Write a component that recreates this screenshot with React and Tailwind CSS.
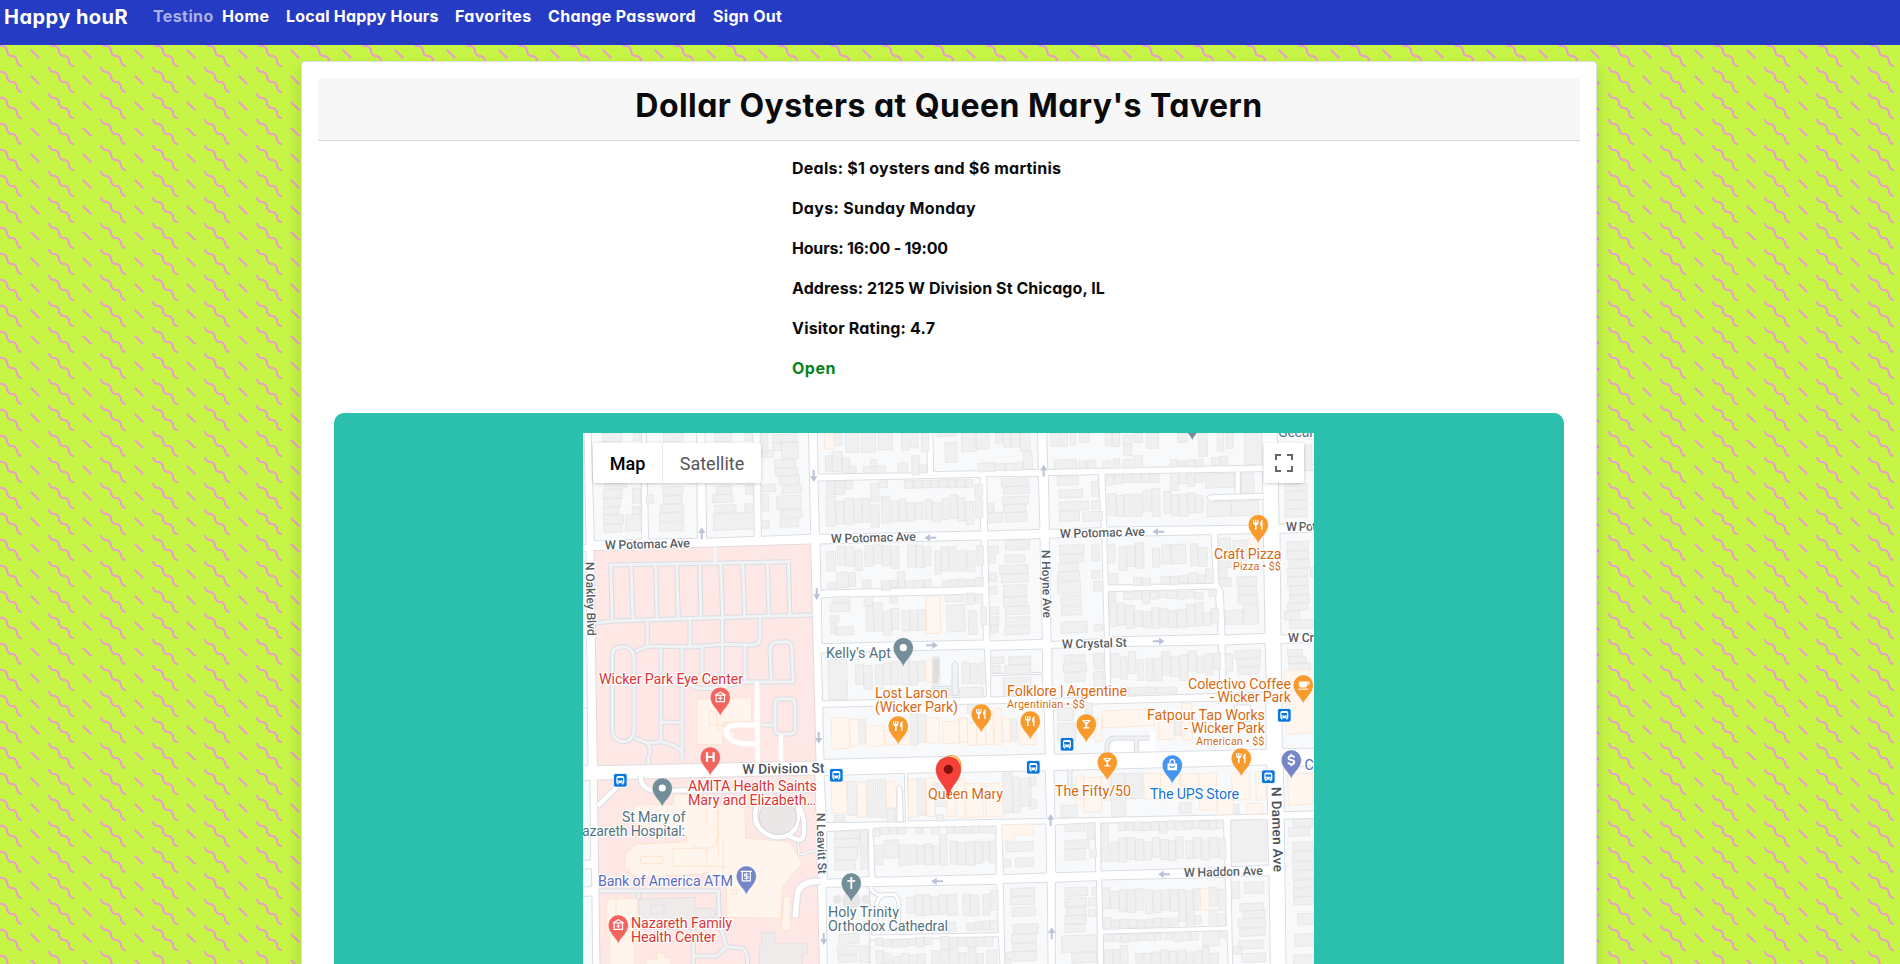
import React from "react";

/* ---------- map data: every tile is drawn in thirds of a pixel ---------- */

const TILES = [
  {
    id: "nw", at: "translate(580 425) scale(0.33333)",
    blocks: [
      "0,0 12,0 18,360 0,360", "0,380 18,380 22,852 0,852",
      "33,0 184,0 185,342 43,348", "198,0 350,0 352,340 206,342", "375,0 518,0 523,334 380,340", "540,0 685,0 692,328 544,334",
    ],
    gray: "67,24,58,26 160,24,20,22 74,175,65,15 69,194,57,28 72,218,50,28 70,246,46,22 70,270,60,26 72,298,54,24 157,190,24,44 157,246,24,22 136,268,44,50 250,24,58,26 248,185,60,24 250,212,56,24 240,238,70,24 238,264,72,24 238,292,72,26 198,210,22,26 404,24,50,26 495,24,22,22 410,183,44,26 398,208,60,24 404,240,64,22 400,264,122,50 497,180,22,28 494,236,26,22 578,28,72,26 578,52,26,25 604,50,50,52 545,24,18,60 545,75,36,22 584,103,62,26 586,128,66,24 598,152,60,26 606,180,58,24 590,212,72,40 602,254,64,24 600,282,56,24 545,178,42,22 545,208,20,50 545,286,22,24",
    cream: "",
  },
  {
    id: "n", at: "translate(820 425) scale(0.33333)",
    blocks: [
      "-8,0 320,0 322,143 -6,147", "338,0 652,0 655,133 341,140", "-6,168 480,157 482,318 -2,328", "500,155 655,155 660,313 503,318",
      "0,357 483,345 488,484 3,495", "503,346 660,341 667,643 510,648", "4,518 487,507 490,645 6,656", "4,684 493,672 500,815 8,828",
      "512,676 667,672 668,742 512,746", "512,752 668,748 668,812 512,816",
    ],
    gray: "16,92,20,46 20,170,24,40 40,24,25,38 76,24,40,58 124,24,43,58 175,24,42,50 244,24,22,52 272,24,22,44 304,24,22,56 36,80,30,60 66,100,22,42 88,124,20,18 130,124,66,18 152,104,18,30 234,114,28,30 275,92,22,58 297,120,22,22 352,24,58,10 375,52,35,60 424,24,44,56 468,24,38,48 526,24,22,32 550,24,22,42 572,24,28,42 600,24,30,54 610,80,26,52 474,114,52,26 526,116,30,20 556,116,22,20 582,112,26,24 46,170,28,38 74,170,24,22 152,176,24,54 176,168,26,20 253,166,26,24 280,166,24,24 306,166,26,22 334,166,22,22 358,164,24,24 384,164,24,24 410,164,26,24 436,164,22,24 464,178,24,36 466,220,22,58 18,214,28,90 46,230,26,66 72,220,28,78 102,222,24,70 126,220,22,72 153,240,24,66 184,214,25,80 214,228,20,62 238,223,19,64 260,234,24,56 284,232,24,50 315,223,20,60 336,232,26,58 366,220,20,64 390,210,22,70 412,218,22,70 436,230,24,68 544,160,80,24 550,184,78,22 548,214,78,24 550,238,68,24 555,262,66,28 502,236,20,26 503,262,44,30 20,380,26,58 52,364,24,56 76,366,26,58 106,376,20,60 134,362,26,62 160,360,26,54 186,362,24,60 212,364,24,66 262,360,26,66 288,362,22,66 310,366,22,56 344,378,18,70 364,366,22,72 386,366,22,72 414,376,24,62 442,378,22,62 470,362,20,58 24,472,26,20 50,442,34,46 86,442,20,42 126,465,26,24 184,468,26,28 210,466,24,22 232,440,22,46 256,468,26,20 284,466,26,22 312,464,22,24 366,468,22,20 388,464,24,22 414,462,22,24 440,464,22,20 466,458,24,26 556,346,72,28 554,390,60,22 538,420,86,26 544,446,80,26 550,480,70,36 550,514,70,30 556,544,72,24 556,576,72,24 553,604,76,24 505,364,30,22 508,390,18,24 508,444,22,26 508,484,22,24 510,546,26,22 510,574,26,26 512,602,22,22 36,514,54,18 30,536,60,24 30,572,26,20 32,596,18,30 46,606,54,24 132,514,26,28 138,542,22,76 160,534,26,84 190,558,24,72 214,550,22,64 246,556,22,62 270,556,22,60 294,554,22,62 376,510,54,20 380,540,54,80 438,504,26,34 466,508,22,26 444,556,26,72 482,544,18,56 210,514,22,20 24,704,56,120 106,718,24,60 130,722,26,70 166,720,22,70 190,716,22,62 212,710,24,68 242,700,26,80 266,710,26,70 292,708,22,60 336,696,22,82 426,712,22,64 450,716,22,60 478,712,18,64 420,794,70,22 512,696,40,20 566,694,66,24 516,722,24,22 554,720,78,26 550,758,82,52",
    cream: "13,24,28,48 318,514,42,112 318,706,18,66",
  },
  {
    id: "ne", at: "translate(1065 425) scale(0.33333)",
    blocks: [
      "-55,0 590,0 592,120 -52,133", "636,0 765,0 765,118 640,120", "-50,152 100,149 108,308 -47,313", "120,148 592,140 595,300 125,306",
      "640,140 765,135 765,295 642,298", "-47,340 110,333 118,640 -42,650", "125,335 438,329 445,475 130,480",
      "458,328 595,325 600,625 480,630 475,500 460,470", "645,325 765,320 765,627 648,630", "130,500 450,492 460,628 133,636",
      "-40,670 118,667 122,812 -38,822", "135,665 460,660 465,805 137,815", "480,660 600,655 605,800 485,806", "648,655 765,652 765,970 652,970",
    ],
    gray: "-42,24,22,40 -15,24,22,40 16,24,16,36 42,24,30,28 120,24,20,38 142,24,22,40 174,30,26,28 176,58,24,34 206,24,26,28 244,24,36,46 338,24,28,28 400,24,26,70 456,24,20,54 484,24,20,46 538,24,52,94 -32,104,66,26 42,108,24,22 68,106,24,24 114,108,22,22 144,102,20,28 174,104,26,26 206,92,26,36 316,104,22,22 338,108,24,16 366,104,24,22 392,104,22,22 440,98,26,22 466,94,22,26 -23,154,62,26 -18,194,70,24 -18,230,88,26 -17,258,60,30 80,170,20,44 80,228,26,24 54,260,58,28 125,150,22,30 148,150,24,26 174,150,24,22 200,148,26,24 228,148,24,24 254,148,28,24 316,150,24,46 342,150,24,26 366,148,22,36 390,146,26,26 422,146,96,42 528,144,38,70 128,206,26,66 154,212,22,62 176,208,22,66 204,208,26,66 234,196,24,62 260,190,24,84 296,200,22,64 318,210,22,62 342,208,24,66 368,204,22,60 390,212,24,50 426,230,72,44 498,228,82,44 660,176,66,22 660,200,66,24 660,226,66,24 660,252,66,24 718,60,22,76 -17,360,74,28 -15,388,71,24 -18,415,58,24 -22,440,66,26 -23,470,69,36 -12,512,60,28 -10,544,60,26 -12,590,78,34 80,358,22,50 80,436,24,24 86,468,22,30 88,598,24,20 127,358,22,54 162,366,22,70 184,364,26,60 210,354,26,76 262,370,22,56 290,360,28,56 318,358,44,58 376,356,22,66 400,368,26,56 130,446,28,32 206,458,24,24 232,460,24,22 288,454,26,24 314,454,26,26 342,452,26,22 370,444,28,30 400,450,20,22 422,430,24,44 462,340,34,88 462,430,24,30 466,460,32,24 504,346,42,60 516,455,58,28 520,484,54,24 518,510,60,24 534,538,46,60 480,556,54,42 134,503,18,24 134,530,20,74 156,534,24,66 182,542,26,68 206,558,26,46 234,560,24,48 260,548,22,62 284,550,22,56 310,556,24,52 336,554,28,54 364,538,26,66 390,532,24,70 414,562,24,40 438,550,22,46 176,502,24,22 206,500,24,22 232,502,22,34 256,500,24,22 280,496,26,22 306,498,28,22 336,500,22,24 364,500,24,18 390,502,24,20 432,494,22,20 666,350,64,26 666,378,64,24 672,404,60,26 668,430,60,24 668,456,60,26 674,482,56,26 674,510,58,24 668,534,60,22 658,558,46,26 674,584,80,26 736,426,20,30 -3,690,63,22 -5,716,69,24 0,742,60,28 86,686,30,46 86,740,30,64 137,686,24,70 166,696,20,66 190,680,22,66 218,704,18,62 244,700,20,68 266,700,24,68 290,680,26,70 316,694,26,60 344,690,24,76 368,678,26,60 394,694,22,50 420,686,22,64 446,684,20,50 480,686,22,54 510,676,76,24 516,702,70,22 518,726,64,22 668,674,44,20 670,696,54,20 672,714,64,26",
    cream: "546,340,34,60",
  },
  {
    id: "sw", at: "translate(580 690) scale(0.33333)",
    blocks: ["0,55 22,55 24,225 0,228", "0,275 30,270 32,510 0,512", "0,538 34,536 35,590 0,592", "0,620 36,618 38,830 0,830"],
    gray: "", cream: "",
  },
  {
    id: "s", at: "translate(820 690) scale(0.33333)",
    blocks: [
      "8,52 672,38 676,192 12,208", "12,257 253,250 257,395 20,398", "262,250 676,242 680,385 266,393", "20,425 145,418 147,560 22,568",
      "160,415 527,408 529,553 165,562", "546,405 678,402 680,549 550,554", "18,592 148,590 150,830 22,830", "148,590 530,583 535,728 155,735",
      "550,580 682,577 684,830 555,830", "150,750 535,740 540,830 150,830",
    ],
    gray: "116,88,20,74 270,56,22,110 292,74,26,82 442,45,44,25 570,88,20,64 386,-5,18,22 418,-8,70,30 82,274,26,102 140,270,26,112 172,268,24,114 202,356,24,40 290,266,26,110 44,376,30,20 350,374,22,20 548,250,28,118 578,262,20,106 602,266,30,82 626,262,22,26 628,328,22,28 350,280,30,70 44,424,76,22 42,446,76,26 44,472,68,38 44,510,62,30 120,424,22,50 120,478,22,26 122,510,20,28 158,420,22,20 164,466,24,58 192,450,44,54 236,466,24,60 266,464,24,60 290,468,24,54 312,462,26,62 336,468,24,54 358,434,22,92 390,454,22,68 410,458,26,66 438,456,26,70 464,454,22,66 488,456,20,56 508,454,20,64 180,412,26,22 206,412,24,20 230,412,28,20 288,414,22,18 334,412,24,20 380,410,22,20 404,410,22,20 430,410,24,20 454,408,24,20 478,408,24,20 508,410,22,20 558,456,82,28 586,504,54,26 552,508,20,22 260,622,24,48 285,614,22,64 308,614,22,62 332,620,22,54 356,614,24,58 380,614,30,62 428,612,22,64 450,616,26,62 488,612,20,64 512,600,22,60 360,700,26,30 386,696,22,28 440,700,22,22 464,696,22,24 488,694,22,26 508,692,26,28 572,594,72,24 570,620,74,24 576,652,70,26 580,702,74,28 574,732,74,26 578,760,72,24 582,784,68,28 556,786,20,22 554,808,20,20 56,732,60,30 52,768,60,26 54,796,56,20 118,768,26,50 166,744,22,22 188,748,26,22 214,750,22,22 240,750,22,20 264,746,24,20 288,742,24,28 312,742,24,22 362,740,24,40 388,742,24,30 414,742,24,26 440,742,24,28 468,742,22,26 494,740,24,30 168,782,22,40 190,790,22,30 218,800,22,22 244,790,22,32 268,796,24,26 292,792,24,30 334,782,22,40 360,780,26,40 388,776,26,46 416,788,22,34 444,772,24,50 470,790,20,30 500,780,30,42",
    cream: "34,84,54,92 88,88,28,80 138,108,54,60 194,120,72,44 318,84,40,74 368,94,50,66 416,84,26,72 442,98,28,68 470,94,26,70 496,66,22,98 522,54,22,110 548,84,22,70 596,100,50,64 34,274,46,96 112,276,26,106 198,274,30,80 264,270,26,112 318,264,26,116 380,300,24,80 410,268,22,116 438,280,50,102 496,280,52,100",
  },
  {
    id: "se", at: "translate(1065 690) scale(0.33333)",
    blocks: [
      "-35,45 602,30 604,178 -32,193", "-33,242 605,225 608,372 -30,385", "655,232 765,225 765,362 658,365", "-29,405 90,398 92,545 -28,548",
      "107,400 475,390 480,533 108,543", "497,390 607,388 611,525 499,530", "658,388 765,384 765,990 665,990", "-29,577 95,572 98,830 -29,830",
      "110,570 480,562 484,708 114,718", "498,560 612,557 616,830 503,830", "115,732 485,722 490,830 115,830",
    ],
    gray: "60,38,22,36 328,80,20,56 -23,54,48,38 -23,100,54,52 165,-8,26,28 192,-8,80,20 275,-8,60,18 138,250,42,130 180,250,52,76 -12,346,48,36 342,338,36,32 504,344,18,26 0,402,60,22 66,402,22,46 0,450,72,26 0,476,60,34 74,478,20,24 110,404,20,28 160,396,22,26 184,398,22,22 206,396,24,26 232,400,24,22 258,398,24,22 282,396,22,34 306,392,22,26 332,394,20,26 356,394,24,24 382,392,22,24 408,394,24,24 432,392,22,26 456,390,20,26 108,438,22,76 136,458,24,56 160,444,24,72 186,442,24,66 210,448,26,64 236,456,24,54 262,442,22,60 286,448,24,60 310,452,22,60 332,440,22,64 362,452,24,54 384,442,24,62 408,450,24,60 434,442,24,60 462,446,20,60 498,390,104,124 670,412,64,26 684,388,60,22 684,456,60,26 682,484,64,28 684,514,60,26 684,542,64,28 0,592,68,26 0,624,64,26 4,652,58,24 0,676,64,26 0,702,60,24 80,592,14,24 70,624,24,24 70,658,22,22 112,594,22,62 136,604,26,52 162,600,22,64 186,600,24,68 212,596,22,64 240,600,22,72 264,602,24,66 290,600,24,60 314,600,26,64 340,598,22,96 362,602,24,70 384,596,22,64 432,592,24,56 460,598,22,62 116,682,22,32 140,690,24,22 164,688,24,26 190,688,24,24 216,690,22,22 240,688,24,24 266,684,22,26 290,686,22,26 316,684,24,22 364,676,24,28 388,676,20,26 432,660,22,50 460,672,22,36 500,576,24,50 538,576,58,34 524,640,72,22 534,662,66,22 518,686,84,26 524,714,76,24 520,752,76,24 506,770,24,22 530,790,72,26 686,566,60,26 686,594,60,26 686,620,60,24 698,670,50,34 690,732,58,36 686,794,62,30 120,734,22,20 144,734,24,20 168,734,24,22 194,732,24,22 220,732,20,20 244,730,24,22 270,730,20,20 300,728,24,22 326,730,22,24 354,728,22,24 378,730,22,20 414,724,48,44 464,722,22,22 118,780,24,45 144,778,20,45 166,766,22,56 212,790,20,30 236,790,22,30 260,786,26,36 286,780,24,42 312,784,22,38 338,780,24,40 362,786,22,36 388,782,22,40 412,770,20,52 436,790,24,32 -10,736,106,50 20,788,75,30",
    cream: "112,60,156,50 280,80,46,68 350,40,30,110 660,-60,90,190 88,85,22,68 32,258,24,90 56,262,52,104 108,260,26,72 236,250,50,76 286,252,60,76 346,252,52,76 402,250,52,110 456,300,48,74 500,250,54,80 572,244,30,86 545,340,46,32 668,250,75,94 406,596,26,64",
  },
];

const rectPath = (list) =>
  list
    .split(" ")
    .filter(Boolean)
    .map((r) => {
      const [x, y, w, h] = r.split(",").map(Number);
      const s = w * 0.02;
      const t = h * 0.02;
      return `M${x},${y + s}L${x + w},${y - s}L${x + w + t},${y + h - s}L${x + t},${y + h + s}Z`;
    })
    .join("");

function Tile({ tile }) {
  return (
    <g transform={tile.at} strokeLinejoin="round">
      {tile.blocks.map((p) => (
        <polygon key={p} points={p} fill="#f8f9fb" stroke="#dadee4" strokeWidth="3" />
      ))}
      <path d={rectPath(tile.gray)} fill="#f0f0f0" stroke="#e5e5e6" strokeWidth="2.4" />
      <path d={rectPath(tile.cream)} fill="#fff6f0" stroke="#fce4d2" strokeWidth="2.4" />
    </g>
  );
}

function Lane({ d, w = 9, color = "#f1f3f4", edge = "#dadde2" }) {
  return (
    <g fill="none" strokeLinejoin="round" strokeLinecap="butt">
      <path d={d} stroke={edge} strokeWidth={w + 6} />
      <path d={d} stroke={color} strokeWidth={w} />
    </g>
  );
}

const LANES =
  "M86,420 L630,410 M92,420 L97,585 M153,420 L159,582 M227,418 L231,580 M290,417 L295,580 M359,416 L363,578 M422,414 L428,576 M488,413 L494,576 M562,412 L567,574 M625,410 L630,574 M45,595 L100,588 L400,578 L700,570 M202,590 V660 M330,585 V665 M427,580 V810 M540,578 V640 Q540,658 520,660 L430,658 L330,666 L205,663 L165,680 M97,915 V690 Q97,665 130,665 Q160,668 162,700 V915 Q160,948 130,950 Q100,948 97,915 M165,940 L205,955 L243,950 Q290,958 310,985 M205,955 Q215,980 205,1000 V1018 M243,670 V950 M306,670 V1010 M366,662 V752 M495,662 V772 M310,750 Q330,792 365,790 Q420,792 450,780 L495,771 L640,770 L635,670 Q635,652 620,650 L590,652 Q572,655 570,670 L574,770 M245,892 H310 M598,822 H630 Q645,822 645,838 V912 Q645,927 630,927 H600 Q585,927 585,912 V838 Q585,822 598,822 M545,900 H585";

function Hospital() {
  return (
    <>
      <g transform="translate(580 425) scale(0.33333)">
        <polygon points="42,377 692,357 708,1008 52,1022" fill="#fde8e6" stroke="#e3d9dc" strokeWidth="3" />
        <Lane d={LANES} />
        <path d="M405,365 V412" stroke="#f6f6f7" strokeWidth="10" />
        <path d="M531,772 L533,1012 M603,930 V1010" fill="none" stroke="#fff" strokeWidth="13" />
      </g>
      <g transform="translate(580 690) scale(0.33333)">
        <polygon points="52,270 705,255 718,830 60,830" fill="#fde8e6" stroke="#e3d9dc" strokeWidth="3" />
        <Lane d="M182,258 Q182,298 225,302 L700,300 M53,348 L112,290" w={13} color="#fff" />
        <Lane d="M60,603 H420 M415,600 L418,700 L440,770 L490,775 Q503,785 503,830 M345,798 H410 L440,770 M340,715 V830 M175,610 V640" />
        <g fill="#fff5ec" stroke="#fce0c8" strokeWidth="2.4">
          <path d="M350,28 L515,22 L515,95 L430,97 L428,165 L350,163Z" />
          <path d="M388,65 H410 V105 H388Z M415,102 L470,130 L460,143 L410,115Z" />
          <path d="M160,345 L280,343 L282,312 L400,316 L402,350 L470,338 L495,360 L497,445 L630,455 L665,520 L608,592 L603,685 L440,682 L440,590 L385,550 L185,562 Q145,560 148,540 Q125,530 137,510 Q130,490 150,480 Q155,460 185,462 L320,455 L320,440 L160,400Z" />
          <path d="M612,618 L630,620 L630,720 L604,720Z" />
          <path d="M80,628 L172,625 L172,702 L164,705 L165,830 L90,830 L90,740 L80,738Z M230,790 L255,790 L255,805 L270,805 L270,830 L200,830 L200,808 L230,808Z" />
          <path d="M182,500 H248 V520 H182Z M280,475 H380 V528 H280Z M380,360 V455 M415,340 V500 M430,450 V560 M380,530 H440 M108,628 V740 M456,598 H472 V610 H456Z" />
          <path d="M410,345 q12,12 0,24 q12,12 0,24 q12,12 0,24 q12,12 0,24 v20 q-12,20 -24,8 q-12,12 -24,0 q-12,10 -24,-4" />
        </g>
        <path d="M175,627 L345,622 L345,655 L405,655 L405,682 L345,685 L343,718 L182,718Z M545,728 H585 V760 H682 V792 H666 V830 H538 V768 H545Z M212,645 H252 V672 H212Z" fill="#f0ebeb" stroke="#e2dddf" strokeWidth="2.4" />
        <Lane d="M530,345 Q515,400 550,425 Q590,455 630,432 Q660,405 655,350 M655,348 Q675,380 672,415 Q675,450 655,450 L625,437 L650,412" w={13} color="#fff" />
        <ellipse cx="594" cy="383" rx="56" ry="50" fill="#ece7e7" stroke="#d8d5d7" strokeWidth="3" />
        <path d="M535,105 H470 Q440,106 438,130 Q452,160 500,162 H538 M531,0 V100" fill="none" stroke="#fff" strokeWidth="15" />
        <Lane d="M655,460 L657,490 Q672,498 685,486 L712,482" w={4} color="#fff" />
        <Lane d="M722,574 Q655,572 651,620 L646,682" w={17} color="#fff" />
      </g>
    </>
  );
}

function StreetDetails() {
  return (
    <>
      <g transform="translate(1065 425) scale(0.33333)">
        <Lane d="M518,141 V212" w={13} color="#fff" />
        <Lane d="M438,220 Q434,218 440,218 L596,214" w={15} color="#fff" />
      </g>
      <g transform="translate(820 425) scale(0.33333)">
        <path d="M396,812 V724 Q396,710 405,710 Q414,710 414,724 V812Z" fill="#f1f3f4" stroke="#d7dbe1" strokeWidth="3" />
        <Lane d="M335,788 H396" w={5} color="#f1f3f4" />
        <path d="M340,700 H358 V748 L352,775 H338Z" fill="#dcdfe2" />
      </g>
      <g transform="translate(820 690) scale(0.33333)">
        <path d="M231,396 V296 Q231,286 239,286 Q247,288 247,300 L250,396Z" fill="#fff" stroke="#d7dbe1" strokeWidth="3" />
        <Lane d="M152,590 Q155,612 185,616 Q200,612 225,614 Q240,630 236,660 V728 M185,618 Q160,640 178,660 Q184,690 178,728" w={9} color="#fff" />
        <polygon points="545,404 640,402 640,434 582,436 582,452 545,454" fill="#fff6f0" stroke="#fce4d2" strokeWidth="2.4" />
        <g fill="#e7e7e8"><circle cx="52" cy="628" r="13" /><circle cx="94" cy="632" r="28" /><circle cx="137" cy="628" r="13" /></g>
      </g>
      <g transform="translate(1065 690) scale(0.33333)">
        <path d="M134,186 L146,154 H254 V124 L270,124 V182Z" fill="#fff" />
        <Lane d="M126,188 V168 Q128,145 150,144 H254 M214,146 V186" w={9} color="#eef0f2" />
        <Lane d="M15,238 V290" w={9} />
        <path d="M508,45 H556 V95 H508Z" fill="#fff" stroke="#d7dbe1" strokeWidth="3" />
      </g>
    </>
  );
}

/* ---------- symbols ---------- */

const ROAD = "#5a5e65";
const ORANGE = "#d86a12";
const RED = "#dc3633";
const SLATE = "#557380";
const PURPLE = "#5b6cbf";

/* [text, x, baseline, length, size, colour, weight, rotation] in page pixels */
const LABELS = [
  ["W Potomac Ave", 605, 549.5, 85, 12.5, ROAD, 500, -1.5],
  ["W Potomac Ave", 831, 543, 85, 12.5, ROAD, 500, -1.5],
  ["W Potomac Ave", 1060, 538, 85, 12.5, ROAD, 500, -1.5],
  ["W Pot", 1286, 531, 30.5, 12.5, ROAD, 500, -0.5],
  ["W Crystal St", 1062, 648.5, 65, 12.5, ROAD, 500, -1.5],
  ["W Cr", 1288, 642, 26, 12.5, ROAD, 500, -0.5],
  ["W Haddon Ave", 1184, 877, 79, 12.5, ROAD, 500, -1.5],
  ["W Division St", 742.5, 774, 82, 13.8, "#4b5057", 500, -1],
  ["N Oakley Blvd", 585.5, 562, 74, 12.2, ROAD, 500, 88.5],
  ["N Hoyne Ave", 1041.5, 550, 68, 12.2, ROAD, 500, 88.5],
  ["N Leavitt St", 816.5, 813, 61, 12.2, ROAD, 500, 88.5],
  ["N Damen Ave", 1271.5, 787, 85, 13.6, "#4b5057", 500, 88.5],
  ["Kelly's Apt", 826, 658, 65, 14.3, SLATE, 400, 0],
  ["Gecar", 1278, 437, 36, 14.3, SLATE, 400, 0],
  ["Wicker Park Eye Center", 599, 684, 144, 14.3, RED, 400, 0],
  ["AMITA Health Saints", 688, 791, 129, 14.3, RED, 400, 0],
  ["Mary and Elizabeth…", 688, 805, 128, 14.3, RED, 400, 0],
  ["Nazareth Family", 631, 928, 101, 14.3, RED, 400, 0],
  ["Health Center", 631, 942, 85, 14.3, RED, 400, 0],
  ["St Mary of", 622, 822, 63.5, 14.3, SLATE, 400, 0],
  ["azareth Hospital:", 582, 836, 103, 14.3, SLATE, 400, 0],
  ["Bank of America ATM", 598, 886, 135, 14.3, PURPLE, 400, 0],
  ["Holy Trinity", 828, 917, 71, 14.3, SLATE, 400, 0],
  ["Orthodox Cathedral", 828, 931, 120, 14.3, SLATE, 400, 0],
  ["Lost Larson", 875, 698, 73, 14.3, ORANGE, 400, 0],
  ["(Wicker Park)", 875, 712, 83, 14.3, ORANGE, 400, 0],
  ["Folklore | Argentine", 1007, 696, 120, 14.3, ORANGE, 400, 0],
  ["Argentinian • $$", 1007, 707.5, 78, 11, ORANGE, 400, 0],
  ["Queen Mary", 928, 799, 75, 14.3, ORANGE, 400, 0],
  ["The Fifty/50", 1055, 796, 76, 14.3, ORANGE, 400, 0],
  ["The UPS Store", 1150, 799, 89, 14.3, "#1674d8", 400, 0],
  ["Craft Pizza", 1214, 559, 67.5, 14.3, ORANGE, 400, 0],
  ["Pizza • $$", 1233, 570, 48, 11, ORANGE, 400, 0],
  ["Colectivo Coffee", 1188, 688.5, 103, 14.3, ORANGE, 400, 0],
  ["- Wicker Park", 1210, 702, 81, 14.3, ORANGE, 400, 0],
  ["Fatpour Tap Works", 1147, 719.5, 118, 14.3, ORANGE, 400, 0],
  ["- Wicker Park", 1184, 733, 81, 14.3, ORANGE, 400, 0],
  ["American • $$", 1196, 744.5, 68.5, 11, ORANGE, 400, 0],
  ["C", 1304.5, 770, 9, 14.3, PURPLE, 400, 0],
];

const GLYPHS = {
  fork: (
    <g>
      <path d="M-5.2,-5 V-1.7 Q-5.2,0 -3.3,0.2 V5 H-1.7 V0.2 Q0.2,0 0.2,-1.7 V-5 H-0.9 V-2 H-1.9 V-5 H-3.1 V-2 H-4.1 V-5Z" fill="#fff" />
      <path d="M4.2,-5 Q1.8,-4 1.8,-1 V1 H2.9 V5 H4.2Z" fill="#fff" />
    </g>
  ),
  cocktail: <path d="M-4,-4 H4 V-3 L0.8,0.3 V3.3 H3 V4.5 H-3 V3.3 H-0.8 V0.3 L-4,-3Z M-2,-2.9 L-1.2,-2 H1.2 L2,-2.9Z" fill="#fff" fillRule="evenodd" />,
  coffee: (
    <g>
      <path d="M-4.5,-3.5 H5 Q6.5,-3.5 6.5,-1.9 Q6.5,-0.2 5,-0.2 H4 Q4,2.4 1.8,2.4 H-2.3 Q-4.5,2.4 -4.5,0Z M4,-2.5 V-1.2 H4.8 Q5.4,-1.2 5.4,-1.9 Q5.4,-2.5 4.8,-2.5Z" fill="#fff" fillRule="evenodd" />
      <path d="M-5,3.6 H5 V4.7 H-5Z" fill="#fff" />
    </g>
  ),
  house: (
    <g fill="none" stroke="#fff" strokeWidth="1.2">
      <path d="M-5.4,-2 L0,-5.2 L5.4,-2 M-4.2,-2 V4.3 H4.2 V-2 M-4.2,-2.2 H4.2 M0,-1 V3 M-2,1 H2" />
    </g>
  ),
  h: <path d="M-4.4,-4.8 H-2.2 V-1.1 H2.2 V-4.8 H4.4 V4.8 H2.2 V0.9 H-2.2 V4.8 H-4.4Z" fill="#fff" />,
  dot: <circle r="3.6" fill="#fff" />,
  cross: <path d="M-0.9,-6 H0.9 V-3 H3.9 V-1.2 H0.9 V6 H-0.9 V-1.2 H-3.9 V-3 H-0.9Z" fill="#fff" />,
  atm: (
    <g fill="none" stroke="#fff" strokeWidth="1.2">
      <path d="M-5.6,-4.6 H5.6 M-4,-4.6 V4.8 H4 V-4.6" />
      <path d="M2,-2 H-1.8 V0.2 H1.8 V2.4 H-2 M0,-3.4 V3.8" strokeWidth="1" />
    </g>
  ),
  bag: (
    <g>
      <path d="M-4.8,-1.5 H4.8 V5.3 H-4.8Z" fill="#fff" />
      <path d="M-2.4,-1.5 V-3 Q-2.2,-5.6 0,-5.6 Q2.2,-5.6 2.4,-3 V-1.5" fill="none" stroke="#fff" strokeWidth="1.3" />
      <path d="M-2.3,0.8 Q0,4 2.3,0.8" fill="none" stroke="#4495f0" strokeWidth="1.2" />
    </g>
  ),
  dollar: (
    <path d="M3,-2.4 Q2.6,-4.1 0,-4.1 Q-2.8,-4 -2.8,-2.1 Q-2.7,-0.5 0,0 Q3,0.5 3,2.3 Q2.8,4.1 0,4.2 Q-2.8,4.1 -3.1,2.2 M0,-6.2 V-4 M0,4 V6.2" fill="none" stroke="#fff" strokeWidth="1.8" />
  ),
};

const PINS = [
  [1192.3, 421.7, "#738e99", "dot"],
  [903.3, 647.7, "#738e99", "dot"],
  [1258.3, 524.7, "#f89a2c", "fork"],
  [1303.3, 685, "#f89a2c", "coffee"],
  [720.3, 697.3, "#f4645f", "house"],
  [710.3, 757, "#f4645f", "h"],
  [662.3, 788, "#738e99", "dot"],
  [746.3, 876, "#7586c8", "atm"],
  [618.3, 925, "#f4645f", "house"],
  [898.3, 726, "#f89a2c", "fork"],
  [981.3, 714, "#f89a2c", "fork"],
  [1030.3, 721, "#f89a2c", "fork"],
  [851.3, 883, "#738e99", "cross"],
  [1086.3, 724, "#f89a2c", "cocktail"],
  [1107.3, 762, "#f89a2c", "cocktail"],
  [1172.3, 765, "#4495f0", "bag"],
  [1241.3, 758, "#f89a2c", "fork"],
  [1291.3, 760, "#7586c8", "dollar"],
];

const STOPS = [[620.3, 780.3], [836.3, 775.3], [1033.3, 767.3], [1067, 744.3], [1284.3, 715.3], [1268.3, 776.7]];

const ARROWS = [
  [701.7, 533.3, 0], [813.7, 476, 180], [816.7, 594, 180], [930.3, 537.7, -90], [932, 645.3, 90], [1043.7, 470.7, 0],
  [1158.3, 531.7, -90], [1158.7, 641.3, 90], [818.7, 737.7, 180], [823.7, 939, 180], [937, 881.3, -90], [1050.7, 820, 0],
  [1051.7, 933.3, 0], [1164, 874.3, -90],
];

function Pin({ x, y, color, glyph }) {
  return (
    <g transform={`translate(${x} ${y})`}>
      <path d="M0,19 C-0.8,13.5 -10,8.5 -10,0 A10,10 0 1 1 10,0 C10,8.5 0.8,13.5 0,19Z" fill={color} stroke="#fff" strokeOpacity="0.35" strokeWidth="0.8" />
      {GLYPHS[glyph]}
    </g>
  );
}

function BusStop({ x, y }) {
  return (
    <g transform={`translate(${x} ${y})`}>
      <rect x="-6.8" y="-6.8" width="13.6" height="13.6" rx="2.2" fill="#0b76de" stroke="#fff" strokeWidth="0.8" />
      <path d="M-4,-2.4 Q-4,-4.2 -2.2,-4.2 H2.2 Q4,-4.2 4,-2.4 V3 H3.2 V4.3 H1.8 V3 H-1.8 V4.3 H-3.2 V3 H-4Z" fill="#fff" />
      <path d="M-2.8,-2.3 H2.8 V0.1 H-2.8Z M-2.7,1.1 H-1.5 V2.1 H-2.7Z M1.5,1.1 H2.7 V2.1 H1.5Z" fill="#0b76de" />
    </g>
  );
}

function CityMap() {
  return (
    <svg viewBox="583 433 731 531" width="731" height="531" className="block bg-white" fontFamily="Roboto, sans-serif">
      {TILES.map((t) => (
        <Tile key={t.id} tile={t} />
      ))}
      <Hospital />
      <StreetDetails />
      {ARROWS.map(([x, y, r]) => (
        <path key={`${x}-${y}`} transform={`translate(${x} ${y}) rotate(${r})`} d="M0,-6 L3.6,-0.3 H1 V6 H-1 V-0.3 H-3.6Z" fill="#bcc3d8" />
      ))}
      {LABELS.map(([text, x, y, len, size, color, weight, rot], i) => (
        <text
          key={i}
          transform={`translate(${x} ${y}) rotate(${rot})`}
          textLength={len}
          fontSize={size}
          fontWeight={weight}
          fill={color}
          stroke="#fff"
          strokeWidth="2.4"
          strokeLinejoin="round"
          paintOrder="stroke"
        >
          {text}
        </text>
      ))}
      {PINS.map(([x, y, color, glyph]) => (
        <Pin key={`${x}-${y}`} x={x} y={y} color={color} glyph={glyph} />
      ))}
      {STOPS.map(([x, y]) => (
        <BusStop key={`${x}-${y}`} x={x} y={y} />
      ))}
      <circle cx="951.5" cy="765" r="10" fill="#f89a2c" />
      <circle cx="951.5" cy="765" r="8.6" fill="none" stroke="#ffe3bd" strokeWidth="1" />
      <g transform="translate(948.4 769.3)">
        <path d="M0,29 C-0.6,17 -12.4,12 -12.4,0 A12.4,12.4 0 1 1 12.4,0 C12.4,12 0.6,17 0,29Z" fill="#f5413a" stroke="#d7362f" strokeWidth="0.5" />
        <circle r="4.6" fill="#7f100d" />
      </g>
    </svg>
  );
}

function Backdrop() {
  return (
    <svg className="absolute inset-0 h-full w-full" aria-hidden="true">
      <defs>
        <pattern id="wiggle" x="-4" y="15" width="52" height="26" patternUnits="userSpaceOnUse">
          <path
            fill="#ec9bcc"
            d="M10 10c0-2.21-1.79-4-4-4-3.314 0-6-2.686-6-6h2c0 2.21 1.79 4 4 4 3.314 0 6 2.686 6 6 0 2.21 1.79 4 4 4 3.314 0 6 2.686 6 6 0 2.21 1.79 4 4 4v2c-3.314 0-6-2.686-6-6 0-2.21-1.79-4-4-4-3.314 0-6-2.686-6-6zm25.464-1.95l8.486 8.486-1.414 1.414-8.486-8.486 1.414-1.414z"
          />
        </pattern>
      </defs>
      <rect width="100%" height="100%" fill="url(#wiggle)" />
    </svg>
  );
}

function NavBar() {
  return (
    <nav className="relative flex h-[45px] items-start bg-[#263bc4] pl-1 text-[16px] leading-6 font-bold text-white">
      <span className="w-[149px] pt-[2px] text-[20px] leading-[30px] tracking-[0.45px]">Happy houR</span>
      <span className="w-[69px] pt-[4px] tracking-[0.4px] text-[#a8b1e7]">Testino</span>
      <a className="w-[64px] pt-[4px] tracking-[0.4px]">Home</a>
      <a className="w-[169px] pt-[4px] tracking-[0.22px]">Local Happy Hours</a>
      <a className="w-[93px] pt-[4px] tracking-[0.35px]">Favorites</a>
      <a className="w-[165px] pt-[4px] tracking-[0.34px]">Change Password</a>
      <a className="pt-[4px] tracking-[0.3px]">Sign Out</a>
    </nav>
  );
}

function Detail({ className, children }) {
  return <p className={`whitespace-nowrap ${className}`}>{children}</p>;
}

export default function App() {
  return (
    <div className="relative h-[964px] w-full overflow-hidden bg-[#c6f545] font-[Inter,sans-serif] text-[#0b0b0d] [font-feature-settings:'cv11']">
      <Backdrop />
      <NavBar />
      <main className="relative mt-4 ml-[301px] h-[1000px] w-[1296px] rounded-[4px] border border-[#dfdfdf] bg-white p-4 shadow-[0_8px_16px_rgba(0,0,0,0.15)]">
        <header className="flex h-[63px] items-start justify-center rounded-t-[3px] border-b border-[#d5d5d5] bg-[#f7f7f7] pt-[9px]">
          <h1 className="text-[32px] leading-[38px] font-bold tracking-[0.46px] whitespace-nowrap">Dollar Oysters at Queen Mary's Tavern</h1>
        </header>
        <section className="flex h-[272px] flex-col gap-4 pt-[15px] pl-[474px] text-[16px] leading-6 font-bold">
          <Detail className="tracking-[0.25px]">Deals: $1 oysters and $6 martinis</Detail>
          <Detail className="tracking-[0.32px]">Days: Sunday Monday</Detail>
          <Detail className="tracking-[-0.2px]">Hours: 16:00 - 19:00</Detail>
          <Detail className="tracking-[0.06px]">Address: 2125 W Division St Chicago, IL</Detail>
          <Detail className="tracking-[0.18px]">Visitor Rating: 4.7</Detail>
          <Detail className="tracking-[0.5px] text-[#068319]">Open</Detail>
        </section>
        <section className="mx-4 flex h-[640px] rounded-[10px] bg-[#2bbfad] pt-5 pl-[249px]">
          <div className="relative h-[531px] w-[731px] overflow-hidden font-[Roboto,sans-serif]">
            <CityMap />
            <div className="absolute top-[10px] left-[10px] flex h-10 w-[168px] rounded-[2px] bg-white text-[18px] shadow-[0_1px_4px_-1px_rgba(0,0,0,0.3)]">
              <button className="w-[69px] font-medium text-black">Map</button>
              <button className="flex-1 border-l border-[#ececec] text-[#565656]">Satellite</button>
            </div>
            <button className="absolute top-[10px] right-[10px] flex size-10 items-center justify-center rounded-[2px] bg-white shadow-[0_1px_4px_-1px_rgba(0,0,0,0.3)]">
              <svg width="18" height="18" viewBox="0 0 18 18" fill="#666">
                <path d="M0 0v6h2V2h4V0zM16 0h-4v2h4v4h2V0zM16 16h-4v2h6v-6h-2zM2 12H0v6h6v-2H2z" />
              </svg>
            </button>
          </div>
        </section>
      </main>
    </div>
  );
}
